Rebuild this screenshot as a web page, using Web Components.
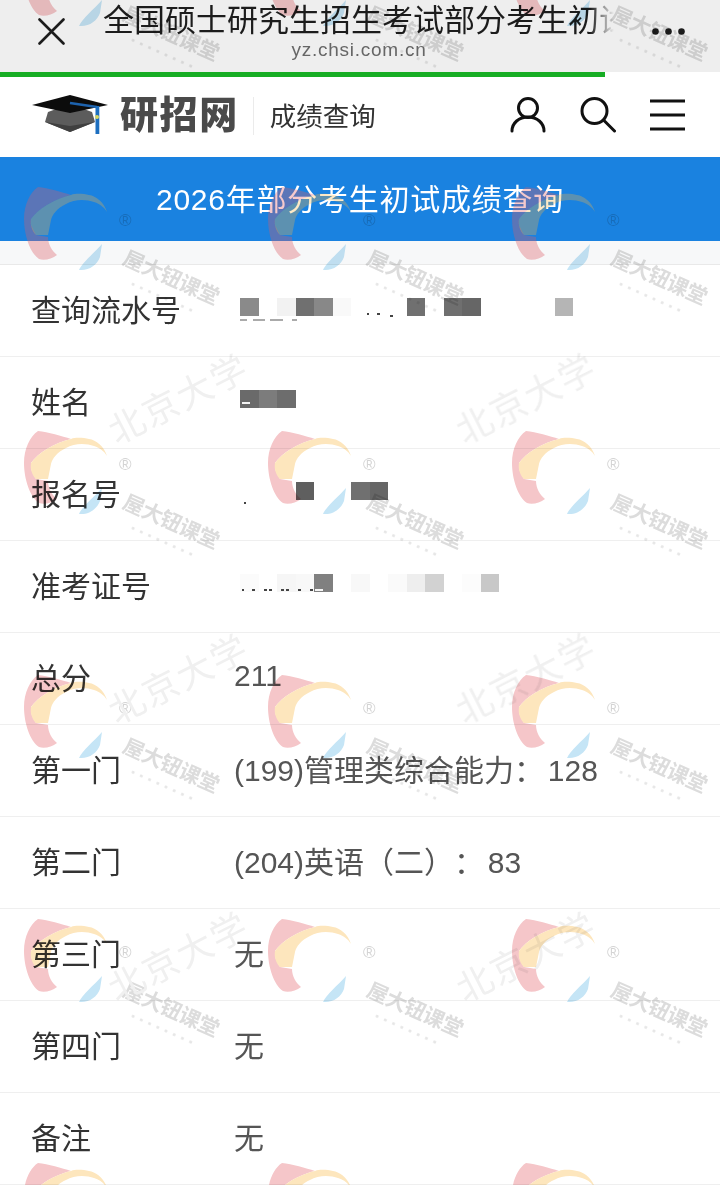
<!DOCTYPE html>
<html lang="zh-CN">
<head>
<meta charset="utf-8">
<title>成绩查询</title>
<style>
  html, body { margin: 0; padding: 0; background: #fff; }
  body {
    font-family: "Liberation Sans", "Noto Sans CJK SC", sans-serif;
    width: 720px;
    height: 1185px;
    overflow: hidden;
  }
</style>
</head>
<body>
<score-page>
  <top-bar title="全国硕士研究生招生考试部分考生初试成绩查询" host-name="yz.chsi.com.cn"></top-bar>
  <site-header></site-header>
  <page-title>2026年部分考生初试成绩查询</page-title>
  <score-list>
    <score-row label="查询流水号"><mask-strip cells="0:8a8a8a 2:f2f2f2 3:707070 4:888888 5:f9f9f9 9:707070 11:6f6f6f 12:666666 17:b5b5b5" marks="0,7,3,#aaa 13,12,3,#aaa 30,13,3,#aaa 52,5,3,#aaa 127,2,-3,#444 137,3,-3,#444 150,3,-1,#444"></mask-strip></score-row>
    <score-row label="姓名"><mask-strip cells="0:6a6a6a 1:7c7c7c 2:6d6d6d" marks="2,8,-6,#f4f4f4"></mask-strip></score-row>
    <score-row label="报名号"><mask-strip cells="3:5f5f5f 6:707070 7:666666" marks="4,2,2,#444"></mask-strip></score-row>
    <score-row label="准考证号"><mask-strip cells="0:fbfbfb 2:f6f6f6 3:f8f8f8 4:808080 6:f8f8f8 8:fafafa 9:eeeeee 10:d2d2d2 12:fcfcfc 13:c8c8c8" marks="2,2,-3,#444 12,3,-3,#444 24,3,-3,#444 29,3,-3,#444 41,3,-3,#444 46,3,-3,#444 58,3,-3,#444 70,3,-3,#444 75,8,-3,#f4f4f4"></mask-strip></score-row>
    <score-row label="总分">211</score-row>
    <score-row label="第一门">(199)管理类综合能力： 128</score-row>
    <score-row label="第二门">(204)英语（二）： 83</score-row>
    <score-row label="第三门">无</score-row>
    <score-row label="第四门">无</score-row>
    <score-row label="备注">无</score-row>
  </score-list>
  <water-marks></water-marks>
</score-page>

<script>
const FONT = '"Liberation Sans", "Noto Sans CJK SC", sans-serif';

class ScorePage extends HTMLElement {
  constructor() {
    super();
    this.attachShadow({ mode: 'open' });
    this.shadowRoot.innerHTML = `
      <style>
        :host {
          display: flex;
          flex-direction: column;
          position: relative;
          width: 720px;
          height: 1185px;
          overflow: hidden;
          background: #fff;
          filter: blur(0.5px);
        }
      </style>
      <slot></slot>`;
  }
}

class TopBar extends HTMLElement {
  constructor() {
    super();
    this.attachShadow({ mode: 'open' });
    this.shadowRoot.innerHTML = `
      <style>
        :host { display: block; font-family: ${FONT}; }
        .bar {
          height: 72px;
          background: #eeeeee;
          display: grid;
          grid-template-columns: 103px 520px 1fr;
          align-items: start;
        }
        .close { margin: 18px 0 0 38px; width: 27px; height: 27px; display: block; }
        .texts { display: flex; flex-direction: column; align-items: center; }
        .title {
          width: 100%;
          margin-top: 1px;
          font-size: 31px;
          line-height: 40px;
          height: 40px;
          color: #1c1c1c;
          white-space: nowrap;
          overflow: hidden;
          -webkit-mask-image: linear-gradient(90deg, #000 487px, transparent 511px);
          mask-image: linear-gradient(90deg, #000 487px, transparent 511px);
        }
        .host {
          margin: -3px 0 0 -8px;
          font-size: 19px;
          line-height: 24px;
          letter-spacing: 0.75px;
          color: #666;
        }
        .more { margin: 28px 0 0 29px; width: 33px; height: 7px; display: block; }
        .progress { height: 5px; background: #fff; }
        .progress div { width: 605px; height: 5px; background: #17ad24; }
      </style>
      <div class="bar">
        <svg class="close" viewBox="0 0 27 27" fill="none" stroke="#1c1c1c" stroke-width="2.6" stroke-linecap="round">
          <path d="M1.5 1.5 25.5 25.5M25.5 1.5 1.5 25.5"/>
        </svg>
        <div class="texts">
          <div class="title"></div>
          <div class="host"></div>
        </div>
        <svg class="more" viewBox="0 0 33 7" fill="#1c1c1c">
          <circle cx="3.5" cy="3.5" r="3.3"/><circle cx="16.5" cy="3.5" r="3.3"/><circle cx="29.5" cy="3.5" r="3.3"/>
        </svg>
      </div>
      <div class="progress"><div></div></div>`;
  }

  connectedCallback() {
    this.shadowRoot.querySelector('.title').textContent = this.getAttribute('title');
    this.shadowRoot.querySelector('.host').textContent = this.getAttribute('host-name');
  }
}

class SiteHeader extends HTMLElement {
  constructor() {
    super();
    this.attachShadow({ mode: 'open' });
    this.shadowRoot.innerHTML = `
      <style>
        :host { display: block; font-family: ${FONT}; }
        header {
          height: 80px;
          background: #fff;
          display: flex;
          align-items: center;
          padding-left: 32px;
        }
        .cap { width: 77px; height: 40px; display: block; margin-top: -4px; }
        .brand {
          margin-left: 11px;
          font-size: 38px;
          line-height: 44px;
          font-weight: 900;
          letter-spacing: 1.6px;
          color: #4a4a4a;
          margin-top: -4px;
        }
        .line { width: 1px; height: 38px; background: #ebebeb; margin: -2px 16px 0 14px; }
        .sub { font-size: 26.5px; color: #333; white-space: nowrap; padding-bottom: 6px; }
        .icons { margin-left: auto; margin-right: 35px; display: flex; gap: 34px; align-items: center; margin-top: -5px; }
        .icons svg { display: block; height: 36px; }
      </style>
      <header>
        <svg class="cap" viewBox="32 95 77 40">
          <path d="M48 112 45 122 70 132 95 122 92 112 70 104Z" fill="#5c5c5c"/>
          <path d="M45 122 70 132 95 122 70 126Z" fill="#3f3f3f"/>
          <path d="M32 105 70 95 108 105 70 113Z" fill="#0c0c0c"/>
          <path d="M70 103 97 107" stroke="#1d62ad" stroke-width="2.5" fill="none"/>
          <rect x="95.5" y="106" width="3.8" height="28" fill="#1d6fc0"/>
          <circle cx="97" cy="117" r="2" fill="#d8d860"/>
        </svg>
        <div class="brand">研招网</div>
        <div class="line"></div>
        <div class="sub">成绩查询</div>
        <div class="icons">
          <svg viewBox="0 0 36 36" width="36" fill="none" stroke="#111" stroke-width="3" stroke-linecap="round">
            <circle cx="18" cy="11" r="9.5"/>
            <path d="M2 34C2 26 9 20 18 20S34 26 34 34"/>
          </svg>
          <svg viewBox="0 0 36 36" width="36" fill="none" stroke="#111" stroke-width="3" stroke-linecap="round">
            <circle cx="14.5" cy="14" r="12.5"/>
            <path d="M24 23.5 34.5 34"/>
          </svg>
          <svg viewBox="0 0 35 36" width="35" fill="none" stroke="#111" stroke-width="3">
            <path d="M0 4H35M0 18H35M0 32H35"/>
          </svg>
        </div>
      </header>`;
  }
}

class PageTitle extends HTMLElement {
  constructor() {
    super();
    this.attachShadow({ mode: 'open' });
    this.shadowRoot.innerHTML = `
      <style>
        :host {
          display: flex;
          align-items: center;
          justify-content: center;
          box-sizing: border-box;
          height: 84px;
          padding-bottom: 4px;
          background: #1a82e0;
          color: #fff;
          font-family: ${FONT};
          font-size: 30px;
          letter-spacing: 0.75px;
        }
      </style>
      <slot></slot>`;
  }
}

class ScoreList extends HTMLElement {
  constructor() {
    super();
    this.attachShadow({ mode: 'open' });
    this.shadowRoot.innerHTML = `
      <style>
        :host { display: flex; flex-direction: column; }
        .gap { height: 23px; background: #f7f8f9; border-bottom: 1px solid #e9e9e9; }
      </style>
      <div class="gap"></div>
      <slot></slot>`;
  }
}

class ScoreRow extends HTMLElement {
  constructor() {
    super();
    this.attachShadow({ mode: 'open' });
    this.shadowRoot.innerHTML = `
      <style>
        :host {
          display: grid;
          grid-template-columns: 203px 1fr;
          align-items: center;
          box-sizing: border-box;
          height: 92px;
          padding-left: 31px;
          border-bottom: 1px solid #efefef;
          font-family: ${FONT};
          font-size: 30px;
          text-spacing-trim: space-all;
        }
        .label { color: #333; padding-bottom: 6px; }
        .value {
          color: #555;
          white-space: nowrap;
          padding-bottom: 6px;
          word-spacing: -4.5px;
        }
      </style>
      <div class="label"></div>
      <div class="value"><slot></slot></div>`;
  }

  connectedCallback() {
    this.shadowRoot.querySelector('.label').textContent = this.getAttribute('label');
  }
}

// 打码的马赛克块，cells 写 "列:颜色"，marks 写露出来的小点 "x,宽,y,颜色"
class MaskStrip extends HTMLElement {
  constructor() {
    super();
    this.attachShadow({ mode: 'open' });
    this.shadowRoot.innerHTML = `
      <style>
        :host { display: block; margin: 5px 0 0 6px; height: 24px; }
        .cells { display: grid; grid-template-columns: repeat(18, 18.5px); height: 18px; }
        .cells i { display: block; height: 18px; grid-row: 1; }
        svg { display: block; width: 360px; height: 6px; overflow: visible; }
      </style>
      <div class="cells"></div>
      <svg viewBox="0 0 360 6"></svg>`;
  }

  connectedCallback() {
    const cells = this.shadowRoot.querySelector('.cells');
    (this.getAttribute('cells') || '').split(' ').forEach((item) => {
      const [col, color] = item.split(':');
      const cell = document.createElement('i');
      cell.style.gridColumn = Number(col) + 1;
      cell.style.background = '#' + color;
      cells.appendChild(cell);
    });
    const svg = this.shadowRoot.querySelector('svg');
    const marks = (this.getAttribute('marks') || '').split(' ').filter(Boolean);
    svg.innerHTML = marks.map((m) => {
      const [x, w, y, fill] = m.split(',');
      return `<rect x="${x}" y="${y}" width="${w}" height="2" fill="${fill}"/>`;
    }).join('');
  }
}

// 盖在整页上的水印，蓝条上的 logo 单独一层，不用 multiply
class WaterMarks extends HTMLElement {
  constructor() {
    super();
    this.attachShadow({ mode: 'open' });
    const tops = [-57, 187, 431, 675, 919, 1163];
    const lefts = [24, 268, 512];
    const logo = (pink, yellow, blue) => `
      <svg viewBox="0 0 86 86" width="86" height="86">
        <path d="M14 0C24 1 38 5 47 8 30 12 14 22 7 32L7 38 12 48 24 50C24 57 28 64 33 68 28 72 20 74 15 72 6 66 0 48 0 32 0 18 6 5 14 0Z" fill="${pink}"/>
        <path d="M7 32C14 22 30 12 47 8 52 6 60 7 65 8 72 9 80 15 83 25 80 20 76 17 70 15 62 12 50 12 42 17 33 21 28 28 27 33L24 48 12 48C8 44 6 38 7 32Z" fill="${yellow}"/>
        <path d="M78 57C70 66 58 76 55 83 65 84 73 78 76 70Z" fill="${blue}"/>
      </svg>`;
    let soft = '';
    let hard = '';
    let texts = '';
    for (const top of tops) {
      for (const left of lefts) {
        const pos = `left:${left}px;top:${top}px`;
        soft += `<div class="mark" style="${pos}">${logo('rgba(226,91,100,.33)', 'rgba(249,183,66,.3)', 'rgba(88,180,231,.33)')}</div>`;
        hard += `<div class="mark" style="${pos}">${logo('#f5c6c9', '#fde6bd', '#c5e5f6')}</div>`;
        texts += `<div class="mark" style="${pos}">
          <span class="reg">®</span>
          <span class="brand">屋大钮课堂</span>
          <span class="dots"></span>
        </div>`;
      }
    }
    for (const top of [378, 658, 936]) {
      for (const left of [103, 451]) {
        texts += `<span class="school" style="left:${left}px;top:${top}px">北京大学</span>`;
      }
    }
    this.shadowRoot.innerHTML = `
      <style>
        :host {
          position: absolute;
          inset: 0;
          display: block;
          pointer-events: none;
          font-family: ${FONT};
        }
        .layer { position: absolute; inset: 0; }
        .multiply { mix-blend-mode: multiply; }
        .band { clip-path: inset(157px 0 944px 0); }
        .off-band { clip-path: polygon(0 0, 100% 0, 100% 157px, 0 157px, 0 241px, 100% 241px, 100% 100%, 0 100%); }
        .mark { position: absolute; width: 86px; height: 86px; }
        .mark svg { display: block; }
        .reg { position: absolute; left: 95px; top: 25px; font-size: 17px; line-height: 18px; color: #d4d4d4; }
        .brand {
          position: absolute;
          left: 100px;
          top: 58px;
          font-size: 21px;
          line-height: 24px;
          font-weight: 700;
          letter-spacing: -0.5px;
          white-space: nowrap;
          color: #dcdcdc;
          transform: rotate(24deg);
          transform-origin: 0 50%;
        }
        .dots {
          position: absolute;
          left: 105px;
          top: 94px;
          width: 72px;
          height: 3px;
          background: radial-gradient(circle, #e6e6e6 1.3px, transparent 1.6px) 0 0 / 9px 3px repeat-x;
          transform: rotate(24deg);
          transform-origin: 0 50%;
        }
        .school {
          position: absolute;
          font-size: 36px;
          line-height: 44px;
          letter-spacing: 2px;
          white-space: nowrap;
          color: #f0f0f0;
          transform: rotate(-27deg);
          transform-origin: 50% 50%;
        }
      </style>
      <div class="layer band">${soft}</div>
      <div class="layer multiply off-band">${hard}</div>
      <div class="layer multiply">${texts}</div>`;
  }
}

customElements.define('top-bar', TopBar);
customElements.define('site-header', SiteHeader);
customElements.define('page-title', PageTitle);
customElements.define('score-list', ScoreList);
customElements.define('score-row', ScoreRow);
customElements.define('mask-strip', MaskStrip);
customElements.define('water-marks', WaterMarks);
customElements.define('score-page', ScorePage);
</script>
</body>
</html>
